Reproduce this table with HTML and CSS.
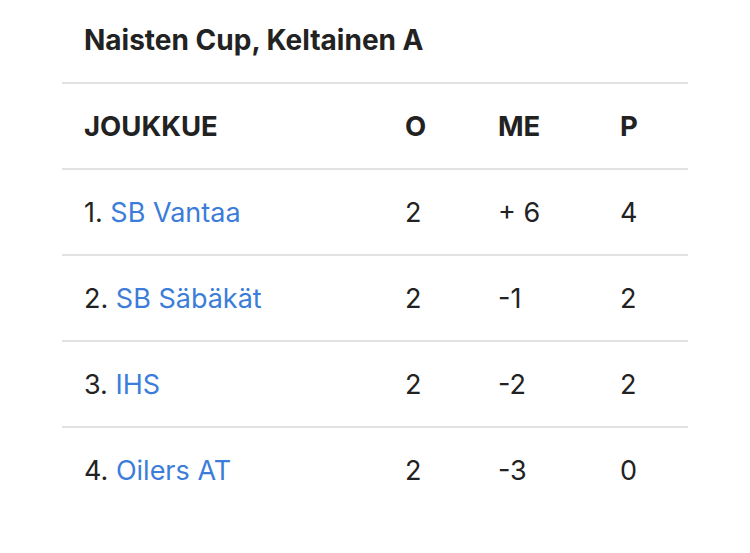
FILE: index.html
```html
<!DOCTYPE html>
<html lang="fi">
<head>
<meta charset="utf-8">
<link rel="stylesheet" href="styles.css">
</head>
<body>
<div class="card">
  <h2 class="title">Naisten Cup, Keltainen A</h2>
  <table class="standings">
    <thead>
      <tr><th class="team">JOUKKUE</th><th class="o">O</th><th class="me">ME</th><th class="p">P</th></tr>
    </thead>
    <tbody>
      <tr><td class="team">1. <a href="#">SB Vantaa</a></td><td class="o">2</td><td class="me">+ 6</td><td class="p">4</td></tr>
      <tr><td class="team">2. <a href="#">SB Säbäkät</a></td><td class="o">2</td><td class="me">-1</td><td class="p">2</td></tr>
      <tr><td class="team">3. <a href="#">IHS</a></td><td class="o">2</td><td class="me">-2</td><td class="p">2</td></tr>
      <tr><td class="team">4. <a href="#">Oilers AT</a></td><td class="o">2</td><td class="me">-3</td><td class="p">0</td></tr>
    </tbody>
  </table>
</div>
</body>
</html>
```
FILE: styles.css
```css
html, body { margin: 0; padding: 0; background: #fff; }
body { font-family: Inter, "Noto Sans", sans-serif; color: #222; }
.card { padding: 0 62px; }
.title { margin: 0; padding: 24px 22px 0; height: 82px; font-size: 28px; font-weight: 700; line-height: 32px; box-sizing: border-box; }
.standings { width: 100%; border-collapse: collapse; border-top: 2px solid #e2e2e2; table-layout: fixed; }
.standings th, .standings td { text-align: left; height: 86px; padding: 0; border-bottom: 2px solid #e2e2e2; font-size: 27px; vertical-align: middle; box-sizing: border-box; }
.standings tbody tr:last-child td { border-bottom: none; }
.standings th { font-weight: 700; font-size: 27.5px; }
.team { padding-left: 22px !important; width: 343px; }
.o { width: 93px; }
.me { width: 122px; }
a { color: #3b7dd8; text-decoration: none; }
```
